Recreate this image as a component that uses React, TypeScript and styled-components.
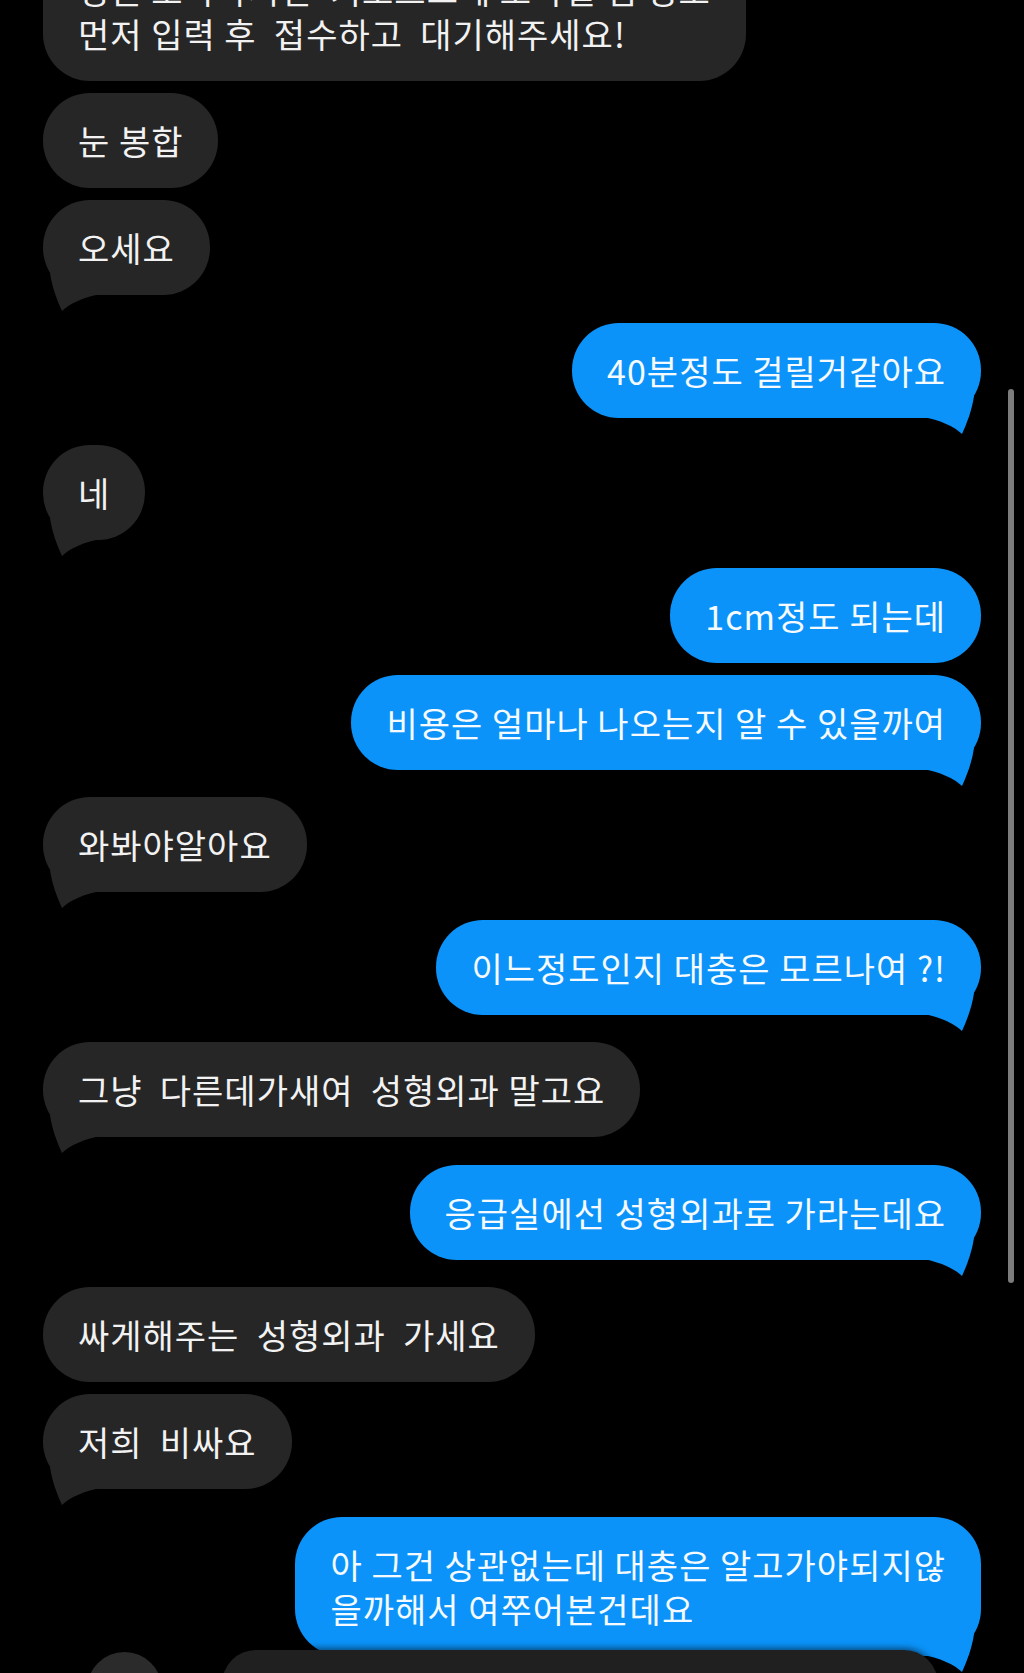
import React from 'react';
import styled, { createGlobalStyle } from 'styled-components';

type Side = 'in' | 'out';

interface iMessage {
  text: string;
  tail?: boolean;
}

interface iGroup {
  side: Side;
  messages: iMessage[];
}

const BLUE = '#0b93f9';
const GRAY = '#262626';

const GlobalStyle = createGlobalStyle`
  html, body {
    margin: 0;
    padding: 0;
    background: #000;
    overflow: hidden;
  }
  body {
    font-family: "Noto Sans CJK KR", "Noto Sans", sans-serif;
  }
`;

const Screen = styled.div`
  position: relative;
  width: 1024px;
  height: 1673px;
  overflow: hidden;
  background: #000;
`;

const Thread = styled.div`
  display: flex;
  flex-direction: column;
  gap: 27.5px;
  margin-top: -58px;
  padding: 0 43px;
`;

const Group = styled.div<{ $side: Side }>`
  display: flex;
  flex-direction: column;
  gap: 12px;
  align-items: ${(p) => (p.$side === 'in' ? 'flex-start' : 'flex-end')};
`;

const Bubble = styled.div<{ $side: Side }>`
  position: relative;
  padding: 26px 35px 25px 35px;
  border-radius: 47px;
  background: ${(p) => (p.$side === 'in' ? GRAY : BLUE)};
  color: ${(p) => (p.$side === 'in' ? '#f2f2f2' : '#f5faff')};
  font-family: "Noto Sans CJK KR", "Noto Sans", sans-serif;
  font-size: 34px;
  letter-spacing: 1px;
  line-height: 44px;
  white-space: pre;
`;

const Tail = styled.svg<{ $side: Side }>`
  position: absolute;
  bottom: -18px;
  width: 62px;
  height: 40px;
  fill: ${(p) => (p.$side === 'in' ? GRAY : BLUE)};
  ${(p) => (p.$side === 'in' ? 'left: 0;' : 'right: 0; transform: scaleX(-1);')}
`;

const Label = styled.span`
  position: relative;
  z-index: 1;
`;

const BottomRow = styled.div`
  position: relative;
  display: flex;
  align-items: flex-start;
  gap: 60px;
  margin-top: -33.5px;
  padding-left: 44px;
`;

const Reaction = styled.div`
  width: 75px;
  height: 75px;
  margin-top: 2px;
  border-radius: 50%;
  background: #2b2b2b;
`;

const Draft = styled.div`
  width: 716px;
  height: 80px;
  border-radius: 34px 34px 0 0;
  background: #202020;
  box-shadow: 0 -2px 6px rgba(0, 0, 0, 0.5);
`;

const ScrollThumb = styled.div`
  position: absolute;
  top: 389px;
  right: 10px;
  width: 6px;
  height: 894px;
  border-radius: 3px;
  background: #7c7c7c;
`;

const groups: iGroup[] = [
  {
    side: 'in',
    messages: [
      { text: '병원 도착하시면  키오스크에 모바일 앱 정보\n먼저 입력 후  접수하고  대기해주세요!' },
      { text: '눈 봉합' },
      { text: '오세요', tail: true },
    ],
  },
  { side: 'out', messages: [{ text: '40분정도 걸릴거같아요', tail: true }] },
  { side: 'in', messages: [{ text: '네', tail: true }] },
  {
    side: 'out',
    messages: [
      { text: '1cm정도 되는데' },
      { text: '비용은 얼마나 나오는지 알 수 있을까여', tail: true },
    ],
  },
  { side: 'in', messages: [{ text: '와봐야알아요', tail: true }] },
  { side: 'out', messages: [{ text: '이느정도인지 대충은 모르나여 ?!', tail: true }] },
  { side: 'in', messages: [{ text: '그냥  다른데가새여  성형외과 말고요', tail: true }] },
  { side: 'out', messages: [{ text: '응급실에선 성형외과로 가라는데요', tail: true }] },
  {
    side: 'in',
    messages: [
      { text: '싸게해주는  성형외과  가세요' },
      { text: '저희  비싸요', tail: true },
    ],
  },
  {
    side: 'out',
    messages: [{ text: '아 그건 상관없는데 대충은 알고가야되지않\n을까해서 여쭈어본건데요', tail: true }],
  },
];

function Message(props: { side: Side } & iMessage) {
  return (
    <Bubble $side={props.side}>
      {props.tail && (
        <Tail $side={props.side} viewBox="0 0 62 40">
          <path d="M7 0 C9 14 14 27 19 38 C26 31 40 24 62 20 L62 0 Z" />
        </Tail>
      )}
      <Label>{props.text}</Label>
    </Bubble>
  );
}

export default function App() {
  return (
    <Screen>
      <GlobalStyle />
      <Thread>
        {groups.map((g, i) => (
          <Group key={i} $side={g.side}>
            {g.messages.map((m, j) => (
              <Message key={j} side={g.side} {...m} />
            ))}
          </Group>
        ))}
        <BottomRow>
          <Reaction />
          <Draft />
        </BottomRow>
      </Thread>
      <ScrollThumb />
    </Screen>
  );
}
